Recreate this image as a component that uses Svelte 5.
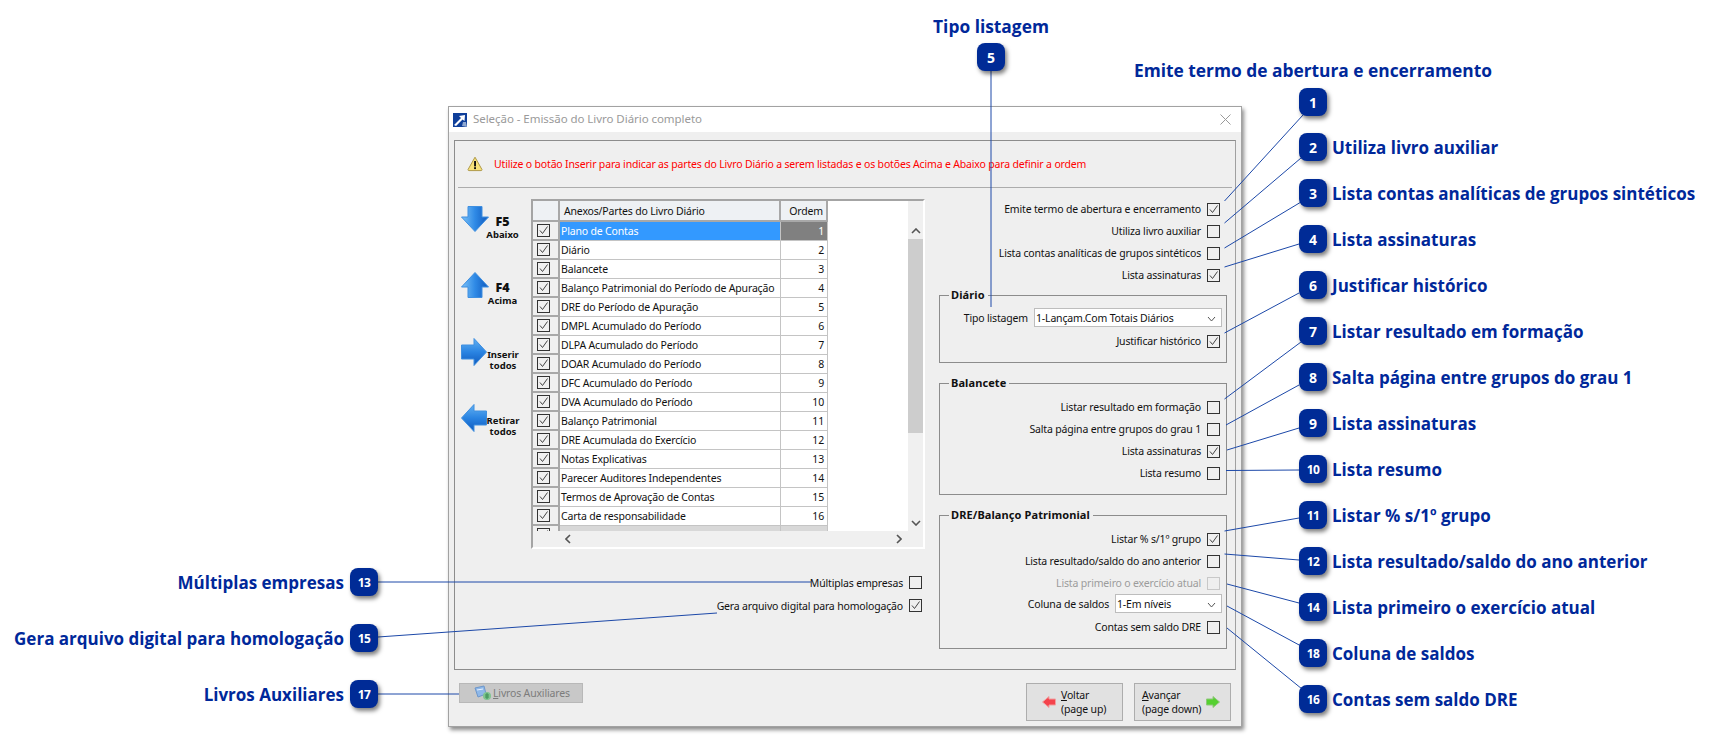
<script>
  const rows = [
    'Plano de Contas','Diário','Balancete','Balanço Patrimonial do Período de Apuração','DRE do Período de Apuração',
    'DMPL Acumulado do Período','DLPA Acumulado do Período','DOAR Acumulado do Período','DFC Acumulado do Período',
    'DVA Acumulado do Período','Balanço Patrimonial','DRE Acumulada do Exercício','Notas Explicativas',
    'Parecer Auditores Independentes','Termos de Aprovação de Contas','Carta de responsabilidade','Relatório da Administração'
  ];
  const rightCallouts = [
    [2,133,'Utiliza livro auxiliar'],[3,179,'Lista contas analíticas de grupos sintéticos'],[4,225,'Lista assinaturas'],
    [6,271,'Justificar histórico'],[7,317,'Listar resultado em formação'],[8,363,'Salta página entre grupos do grau 1'],
    [9,409,'Lista assinaturas'],[10,455,'Lista resumo'],[11,501,'Listar % s/1º grupo'],[12,547,'Lista resultado/saldo do ano anterior'],
    [14,593,'Lista primeiro o exercício atual'],[18,639,'Coluna de saldos'],[16,685,'Contas sem saldo DRE']
  ];
  const leftCallouts = [[13,568,'Múltiplas empresas'],[15,624,'Gera arquivo digital para homologação'],[17,680,'Livros Auxiliares']];
  const lines = [
    [991,71,991,307],[1303,115,1224.5,201],[1301,158,1224.5,223],[1301,202,1224.5,248],[1299,244,1224.5,267],
    [1299,293,1224.5,333],[1301,342,1224.5,399],[1299,385,1226,425],[1299,428,1227,450],[1299,470,1226,470.5],
    [1299,518,1224.5,531],[1299,560,1224.5,554],[1299,603,1227,584],[1301,646,1227,606],[1302,689,1227,628],
    [378,582,811,582],[378,637,717,613],[378,694,459,694]
  ];
</script>

{#snippet box(checked, off = false)}
  <span class="box" class:off>
    {#if checked}
      <svg width="11" height="11" viewBox="0 0 11 11"><path d="M2 5.5 L4.5 8.5 L9.5 1.5" fill="none" stroke="#444" stroke-width="1"/></svg>
    {/if}
  </span>
{/snippet}

{#snippet check(label, checked, off = false)}
  <div class="check" class:muted={off}><span>{label}</span>{@render box(checked, off)}</div>
{/snippet}

{#snippet combo(value, width)}
  <span class="combo" style="width:{width}px">
    <span>{value}</span>
    <svg width="9" height="6" viewBox="0 0 9 6"><path d="M1 1 L4.5 5 L8 1" fill="none" stroke="#555" stroke-width="1"/></svg>
  </span>
{/snippet}

{#snippet hgrad(id)}
  <defs>
    <linearGradient {id} x1="0" y1="0" x2="1" y2="0">
      <stop offset="0" stop-color="#7cc2f7"/><stop offset="0.5" stop-color="#2f8ae6"/><stop offset="1" stop-color="#0f59bd"/>
    </linearGradient>
  </defs>
{/snippet}

{#snippet vgrad(id)}
  <defs>
    <linearGradient {id} x1="0" y1="0" x2="0" y2="1">
      <stop offset="0" stop-color="#63b1f2"/><stop offset="0.5" stop-color="#2a84e2"/><stop offset="1" stop-color="#0f59bd"/>
    </linearGradient>
  </defs>
{/snippet}

<div class="canvas">
  <div class="dialog">
    <div class="titlebar">
      <svg class="appicon" width="14" height="14" viewBox="0 0 14 14">
        <rect width="14" height="14" fill="#0f3f9a"/>
        <path d="M1 12 L8 5 L6 3 L12 2 L11.5 8 L9.5 6.5 L3 13 Z" fill="#fff"/>
        <path d="M9 13 L10 9 L13 9 L14 14 Z" fill="#8fa8d0"/>
      </svg>
      <span class="title">Seleção - Emissão do Livro Diário completo</span>
      <svg class="close" width="11" height="11" viewBox="0 0 11 11"><path d="M0.5 0.5 L10.5 10.5 M10.5 0.5 L0.5 10.5" stroke="#9a9a9a" stroke-width="1"/></svg>
    </div>

    <div class="panel">
      <div class="message">
        <svg width="16" height="16" viewBox="0 0 16 16">
          <path d="M8 1.2 L15 13.6 Q15 14.6 14 14.6 L2 14.6 Q1 14.6 1 13.6 Z" fill="#f7e27a" stroke="#b09a4a" stroke-width="1"/>
          <rect x="7.1" y="5" width="1.9" height="5.4" fill="#111"/><rect x="7.1" y="11.2" width="1.9" height="1.9" fill="#111"/>
        </svg>
        <span>Utilize o botão Inserir para indicar as partes do Livro Diário a serem listadas e os botões Acima e Abaixo para definir a ordem</span>
      </div>

      <div class="body">
        <div class="leftcol">
          <div class="toprow">
            <div class="arrows">
              <div class="arr tall">
                <svg width="28" height="26" viewBox="0 0 28 26">
                  {@render hgrad('g1')}
                  <path d="M7 0.5 H21 V11 H27.5 L14 25.5 L0.5 11 H7 Z" fill="url(#g1)" stroke="#3f8fe0"/>
                </svg>
                <div class="arrtext"><b>F5</b><small>Abaixo</small></div>
              </div>
              <div class="arr tall">
                <svg width="28" height="26" viewBox="0 0 28 26">
                  {@render hgrad('g2')}
                  <path d="M14 0.5 L27.5 15 H21 V25.5 H7 V15 H0.5 Z" fill="url(#g2)" stroke="#3f8fe0"/>
                </svg>
                <div class="arrtext"><b>F4</b><small>Acima</small></div>
              </div>
              <div class="arr">
                <svg width="26" height="28" viewBox="0 0 26 28">
                  {@render vgrad('g3')}
                  <path d="M0.5 7 H13 V0.5 L25.5 14 L13 27.5 V21 H0.5 Z" fill="url(#g3)" stroke="#3f8fe0"/>
                </svg>
                <div class="arrtext two"><small>Inserir</small><small>todos</small></div>
              </div>
              <div class="arr">
                <svg width="26" height="28" viewBox="0 0 26 28">
                  {@render vgrad('g4')}
                  <path d="M25.5 7 H13 V0.5 L0.5 14 L13 27.5 V21 H25.5 Z" fill="url(#g4)" stroke="#3f8fe0"/>
                </svg>
                <div class="arrtext two"><small>Retirar</small><small>todos</small></div>
              </div>
            </div>

            <div class="grid">
              <div class="gridtop">
                <div class="table">
                  <div class="row head">
                    <div class="cc"></div><div class="nc">Anexos/Partes do Livro Diário</div><div class="oc">Ordem</div>
                  </div>
                  {#each rows as r, i}
                    <div class="row" class:sel={i === 0} class:cut={i === 16}>
                      <div class="cc">{@render box(true)}</div>
                      <div class="nc">{r}</div>
                      <div class="oc">{i + 1}</div>
                    </div>
                  {/each}
                </div>
                <div class="vbar">
                  <svg width="10" height="6" viewBox="0 0 10 6"><path d="M1 5 L5 1 L9 5" fill="none" stroke="#555" stroke-width="1.6"/></svg>
                  <div class="thumb"></div>
                  <svg width="10" height="6" viewBox="0 0 10 6"><path d="M1 1 L5 5 L9 1" fill="none" stroke="#555" stroke-width="1.6"/></svg>
                </div>
              </div>
              <div class="hbar">
                <svg width="6" height="10" viewBox="0 0 6 10"><path d="M5 1 L1 5 L5 9" fill="none" stroke="#555" stroke-width="1.6"/></svg>
                <svg width="6" height="10" viewBox="0 0 6 10"><path d="M1 1 L5 5 L1 9" fill="none" stroke="#555" stroke-width="1.6"/></svg>
              </div>
            </div>
          </div>
          <div class="bottomchecks">
            {@render check('Múltiplas empresas', false)}
            {@render check('Gera arquivo digital para homologação', true)}
          </div>
        </div>

        <div class="rightcol">
          <div class="topchecks">
            {@render check('Emite termo de abertura e encerramento', true)}
            {@render check('Utiliza livro auxiliar', false)}
            {@render check('Lista contas analíticas de grupos sintéticos', false)}
            {@render check('Lista assinaturas', true)}
          </div>
          <div class="group g1">
            <span class="legend">Diário</span>
            <div class="comborow"><span>Tipo listagem</span>{@render combo('1-Lançam.Com Totais Diários', 188)}</div>
            <div class="after">{@render check('Justificar histórico', true)}</div>
          </div>
          <div class="group g2">
            <span class="legend">Balancete</span>
            {@render check('Listar resultado em formação', false)}
            {@render check('Salta página entre grupos do grau 1', false)}
            {@render check('Lista assinaturas', true)}
            {@render check('Lista resumo', false)}
          </div>
          <div class="group g3">
            <span class="legend">DRE/Balanço Patrimonial</span>
            {@render check('Listar % s/1º grupo', true)}
            {@render check('Lista resultado/saldo do ano anterior', false)}
            {@render check('Lista primeiro o exercício atual', false, true)}
            <div class="comborow"><span>Coluna de saldos</span>{@render combo('1-Em níveis', 107)}</div>
            <div class="after">{@render check('Contas sem saldo DRE', false)}</div>
          </div>
        </div>
      </div>
    </div>

    <div class="footer">
      <div class="aux">
        <svg width="17" height="16" viewBox="0 0 17 16">
          <path d="M1 3 L10 1 L12 9 L4 12 Z" fill="#8fb8e8" stroke="#6d97cc"/>
          <path d="M3 5 L9 4" stroke="#e8f2ff"/>
          <circle cx="13" cy="11" r="4" fill="#7fc48f"/>
          <path d="M13 8 V14 M11 10 H15 M11 12 H15" stroke="#3f8f55" stroke-width="1"/>
        </svg>
        <span><u>L</u>ivros Auxiliares</span>
      </div>
      <div class="nav">
        <div class="navbtn left">
          <svg width="14" height="12" viewBox="0 0 14 12"><path d="M0.5 6 L7 0.5 V3 H13.5 V9 H7 V11.5 Z" fill="#f4434c" stroke="#f0a0a0"/></svg>
          <span><u>V</u>oltar<br/>(page up)</span>
        </div>
        <div class="navbtn right">
          <span><u>A</u>vançar<br/>(page down)</span>
          <svg width="14" height="12" viewBox="0 0 14 12"><path d="M13.5 6 L7 0.5 V3 H0.5 V9 H7 V11.5 Z" fill="#55d030" stroke="#8fc77a"/></svg>
        </div>
      </div>
    </div>
  </div>

  <svg class="leaders" width="1710" height="738" viewBox="0 0 1710 738">
    {#each lines as l}
      <line x1={l[0]} y1={l[1]} x2={l[2]} y2={l[3]} stroke="#1c48a8" stroke-width="1"/>
    {/each}
  </svg>

  <div class="stack" style="left:791px;top:14px">
    <span class="lbl">Tipo listagem</span><span class="badge">5</span>
  </div>
  <div class="stack up" style="left:1113px;top:58px">
    <span class="lbl">Emite termo de abertura e encerramento</span><span class="badge">1</span>
  </div>
  {#each rightCallouts as c}
    <div class="callout" style="left:1299px;top:{c[1]}px">
      <span class="badge" class:small={c[0] > 9}>{c[0]}</span><span class="lbl">{c[2]}</span>
    </div>
  {/each}
  {#each leftCallouts as c}
    <div class="callout rev" style="right:1332px;top:{c[1]}px">
      <span class="lbl">{c[2]}</span><span class="badge small">{c[0]}</span>
    </div>
  {/each}
</div>

<style>
  :global(body) { margin: 0; background: #fff; }
  .canvas { position: relative; width: 1710px; height: 738px; overflow: hidden; font-family: "Noto Sans", sans-serif; font-size: 10.5px; letter-spacing: -0.17px; color: #111; }

  .dialog { position: absolute; left: 448px; top: 106px; width: 794px; height: 621px; box-sizing: border-box; background: #efefef; border: 1px solid #a2a2a2; box-shadow: 2px 3px 4px rgba(0,0,0,.45); }
  .titlebar { display: flex; align-items: center; height: 25px; background: #fff; padding: 0 10px 0 4px; gap: 6px; }
  .title { color: #9a9a9a; font-size: 11.5px; letter-spacing: -0.05px; flex: 1; padding-bottom: 2px; }
  .appicon, .close { flex: none; }

  .panel { box-sizing: border-box; margin: 8px 0 0 5px; width: 782px; height: 530px; border: 1px solid #8c8c8c; border-right-color: #a0a0a0; }
  .message { box-sizing: content-box; height: 46px; margin: 0 3px; border-bottom: 1px solid #acacac; display: flex; align-items: center; gap: 11px; padding-left: 9px; color: #f00; }
  .body { display: flex; }
  .leftcol { width: 484px; }
  .toprow { display: flex; padding-top: 11px; }
  .arrows { width: 70px; padding: 7px 0 0 6px; }
  .arr { display: grid; grid-template-columns: 26px 31px; height: 66px; align-content: start; }
  .arr svg { overflow: visible; }
  .arrtext { display: flex; flex-direction: column; align-items: center; padding-top: 9px; font-weight: 700; color: #111; }
  .arrtext b { font-size: 12.5px; line-height: 14px; letter-spacing: 0; }
  .arrtext small { font-size: 9.5px; line-height: 11.5px; letter-spacing: 0; }
  .arrtext.two { padding-top: 11px; margin-left: 1px; }
  .arrtext.two small { line-height: 11px; }

  .grid { box-sizing: border-box; width: 394px; height: 350px; border-left: 2px solid #a4a4a4; border-top: 2px solid #a4a4a4; border-right: 2px solid #fff; border-bottom: 2px solid #fff; background: #f0f0f0; display: flex; flex-direction: column; }
  .gridtop { display: flex; height: 330px; }
  .table { width: 375px; background: #fff; overflow: hidden; }
  .row { display: grid; grid-template-columns: 27px 221px 47px; height: 19px; box-sizing: border-box; color: #111; }
  .row > div { display: flex; align-items: center; box-sizing: border-box; border-bottom: 1px solid #c4c4c4; white-space: nowrap; overflow: hidden; }
  .row .cc { background: #f0f0f0; border-right: 2px solid #a8a8a8; border-bottom: 2px solid #a8a8a8; justify-content: center; padding-right: 4px; }
  .row .nc { padding-left: 1px; border-right: 1px solid #c4c4c4; }
  .row .oc { justify-content: flex-end; padding-right: 3px; border-right: 1px solid #c4c4c4; }
  .row.head { height: 21px; }
  .row.head > div { background: #eef1f4; border-bottom: 2px solid #a8a8a8; border-right: 2px solid #a8a8a8; }
  .row.head .nc { padding-left: 4px; }
  .row.sel .nc { background: #3399ff; color: #fff; }
  .row.sel .oc { background: #808080; color: #fff; }
  .row.cut .nc, .row.cut .oc { background: #d8d8d8; }
  .vbar { width: 15px; background: #f0f0f0; margin-top: 21px; display: flex; flex-direction: column; align-items: center; padding-top: 6px; box-sizing: border-box; }
  .thumb { width: 15px; height: 194px; background: #cdcdcd; margin: 5px 0 87px; }
  .hbar { height: 16px; display: flex; justify-content: space-between; align-items: center; padding: 0 21px 0 32px; }

  .bottomchecks { margin-top: 22px; padding-right: 17px; }
  .bottomchecks .check { height: 23px; }
  .check { display: flex; justify-content: flex-end; align-items: center; gap: 6px; height: 22px; white-space: nowrap; }
  .check.muted { color: #9c9c9c; }
  .box { box-sizing: border-box; width: 13px; height: 13px; border: 1px solid #333; display: flex; align-items: center; justify-content: center; flex: none; }
  .box.off { border-color: #c8c8c8; }

  .rightcol { width: 288px; }
  .topchecks { padding: 10px 7px 0 0; margin-bottom: 9px; }
  .group { position: relative; box-sizing: border-box; border: 1px solid #8c8c8c; padding: 12px 4px 0 0; margin-bottom: 20px; }
  .group .check { margin-right: 2px; }
  .g1 { height: 68px; }
  .g2 { height: 112px; }
  .g3 { height: 134px; }
  .legend { position: absolute; left: 9px; top: -8px; padding: 0 3px 0 2px; background: #efefef; font-weight: 700; line-height: 14px; font-size: 11px; letter-spacing: 0.1px; }
  .comborow { display: flex; justify-content: flex-end; align-items: center; gap: 6px; height: 19px; }
  .after { margin-top: 3px; }
  .combo { box-sizing: border-box; height: 19px; display: flex; align-items: center; justify-content: space-between; background: #fff; border: 1px solid #bdbdbd; padding: 0 5px 0 1px; }
  .combo svg { margin-top: 3px; }

  .footer { display: flex; justify-content: space-between; align-items: flex-start; padding: 13px 10px 0; }
  .aux { box-sizing: border-box; width: 124px; height: 20px; display: flex; align-items: center; gap: 2px; padding-left: 14px; background: #c8c8c8; border: 1px solid #b8b8b8; color: #7c7c7c; }
  .nav { display: flex; gap: 11px; }
  .navbtn { box-sizing: border-box; width: 97px; height: 38px; display: flex; align-items: center; background: #e1e1e1; border: 1px solid #adadad; line-height: 14px; white-space: nowrap; }
  .navbtn.left { padding-left: 15px; gap: 5px; }
  .navbtn.right { padding-left: 7px; gap: 5px; }

  .leaders { position: absolute; left: 0; top: 0; pointer-events: none; }
  .callout { position: absolute; display: flex; align-items: center; gap: 5px; }
  .callout .lbl { padding-top: 2px; }
  .callout.rev { gap: 6px; }
  .stack { position: absolute; width: 400px; display: flex; flex-direction: column; align-items: center; gap: 5px; }
  .stack.up { gap: 6px; }
  .stack .lbl { font-size: 17.35px; }
  .lbl { font-family: "Open Sans", sans-serif; font-weight: 700; font-size: 17px; line-height: 24px; letter-spacing: 0; color: #00289a; white-space: nowrap; }
  .badge { box-sizing: border-box; width: 28px; height: 28px; border-radius: 8px; background: #002b96; color: #fff; font-family: "Open Sans", sans-serif; font-weight: 700; font-size: 14px; letter-spacing: 0; display: flex; align-items: center; justify-content: center; box-shadow: 2px 3px 4px rgba(0,0,0,.5); flex: none; }
  .badge.small { font-size: 12px; letter-spacing: -.5px; }
</style>
